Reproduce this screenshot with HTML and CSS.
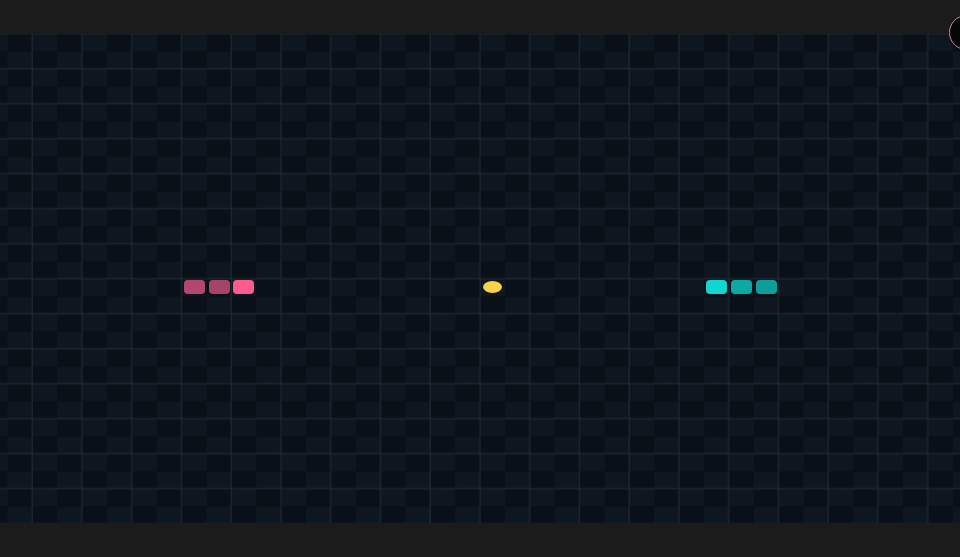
FILE: index.html
```html
<!DOCTYPE html>
<html lang="en">
<head>
<meta charset="utf-8">
<title>Snake Duel</title>
<link rel="stylesheet" href="styles.css">
</head>
<body>
<div class="app">
  <header class="topbar">
    <button class="orb" aria-label="menu"></button>
  </header>
  <main class="board">
    <div class="seg pink-tail c8"></div>
    <div class="seg pink-body c9"></div>
    <div class="seg pink-head c10"></div>
    <div class="food c20"></div>
    <div class="seg cyan-head c29"></div>
    <div class="seg cyan-body c30"></div>
    <div class="seg cyan-tail c31"></div>
  </main>
  <footer class="bottombar"></footer>
</div>
</body>
</html>
```

FILE: styles.css
```css
html, body {
  margin: 0;
  padding: 0;
  background: #1b1b1b;
  font-family: "Liberation Sans", Arial, sans-serif;
}

.app {
  width: 960px;
  height: 557px;
  display: flex;
  flex-direction: column;
  overflow: hidden;
  position: relative;
}

.topbar {
  height: 34px;
  flex: none;
  background: #1b1b1b;
  position: relative;
}

.orb {
  position: absolute;
  top: 15px;
  right: -24px;
  width: 35px;
  height: 35px;
  border-radius: 50%;
  background: #050505;
  border: 1px solid #c9899f;
  padding: 0;
  z-index: 2;
}

.board {
  flex: none;
  height: 489px;
  display: grid;
  grid-template-columns: repeat(38, 24.88px);
  grid-template-rows: repeat(28, 17.5px);
  padding-left: 7.6px;
  overflow: hidden;
  background-color: #0b1219;
  background-image:
    linear-gradient(to right, transparent 0, rgba(38, 50, 64, 0.55) 1px, rgba(38, 50, 64, 0.55) 1.5px, transparent 2.5px),
    linear-gradient(to bottom, transparent 0, rgba(38, 50, 64, 0.55) 1px, rgba(38, 50, 64, 0.55) 1.5px, transparent 2.5px),
    conic-gradient(#0e1720 0 25%, #0a1017 0 50%, #0e1720 0 75%, #0a1017 0);
  background-size: 49.76px 35px, 49.76px 35px, 49.76px 35px;
  background-position: 31px 0, 0 33.5px, 7.6px 0;
}

.bottombar {
  height: 34px;
  flex: none;
  background: #1b1b1b;
}

.seg {
  grid-row: 15;
  width: 21px;
  height: 14px;
  border-radius: 4px;
  justify-self: center;
  align-self: start;
  margin-top: 1px;
}

.food {
  grid-row: 15;
  width: 19px;
  height: 12px;
  border-radius: 50%;
  background: #f8d24b;
  justify-self: center;
  align-self: start;
  margin-top: 2px;
}

.c8 { grid-column: 8; }
.c9 { grid-column: 9; }
.c10 { grid-column: 10; }
.c20 { grid-column: 20; }
.c29 { grid-column: 29; }
.c30 { grid-column: 30; }
.c31 { grid-column: 31; }

.pink-tail { background: #b3476f; }
.pink-body { background: #a64468; }
.pink-head { background: #ff5b8d; }
.cyan-head { background: #11d6cf; }
.cyan-body { background: #0da8a3; }
.cyan-tail { background: #0c9f9a; }
```
